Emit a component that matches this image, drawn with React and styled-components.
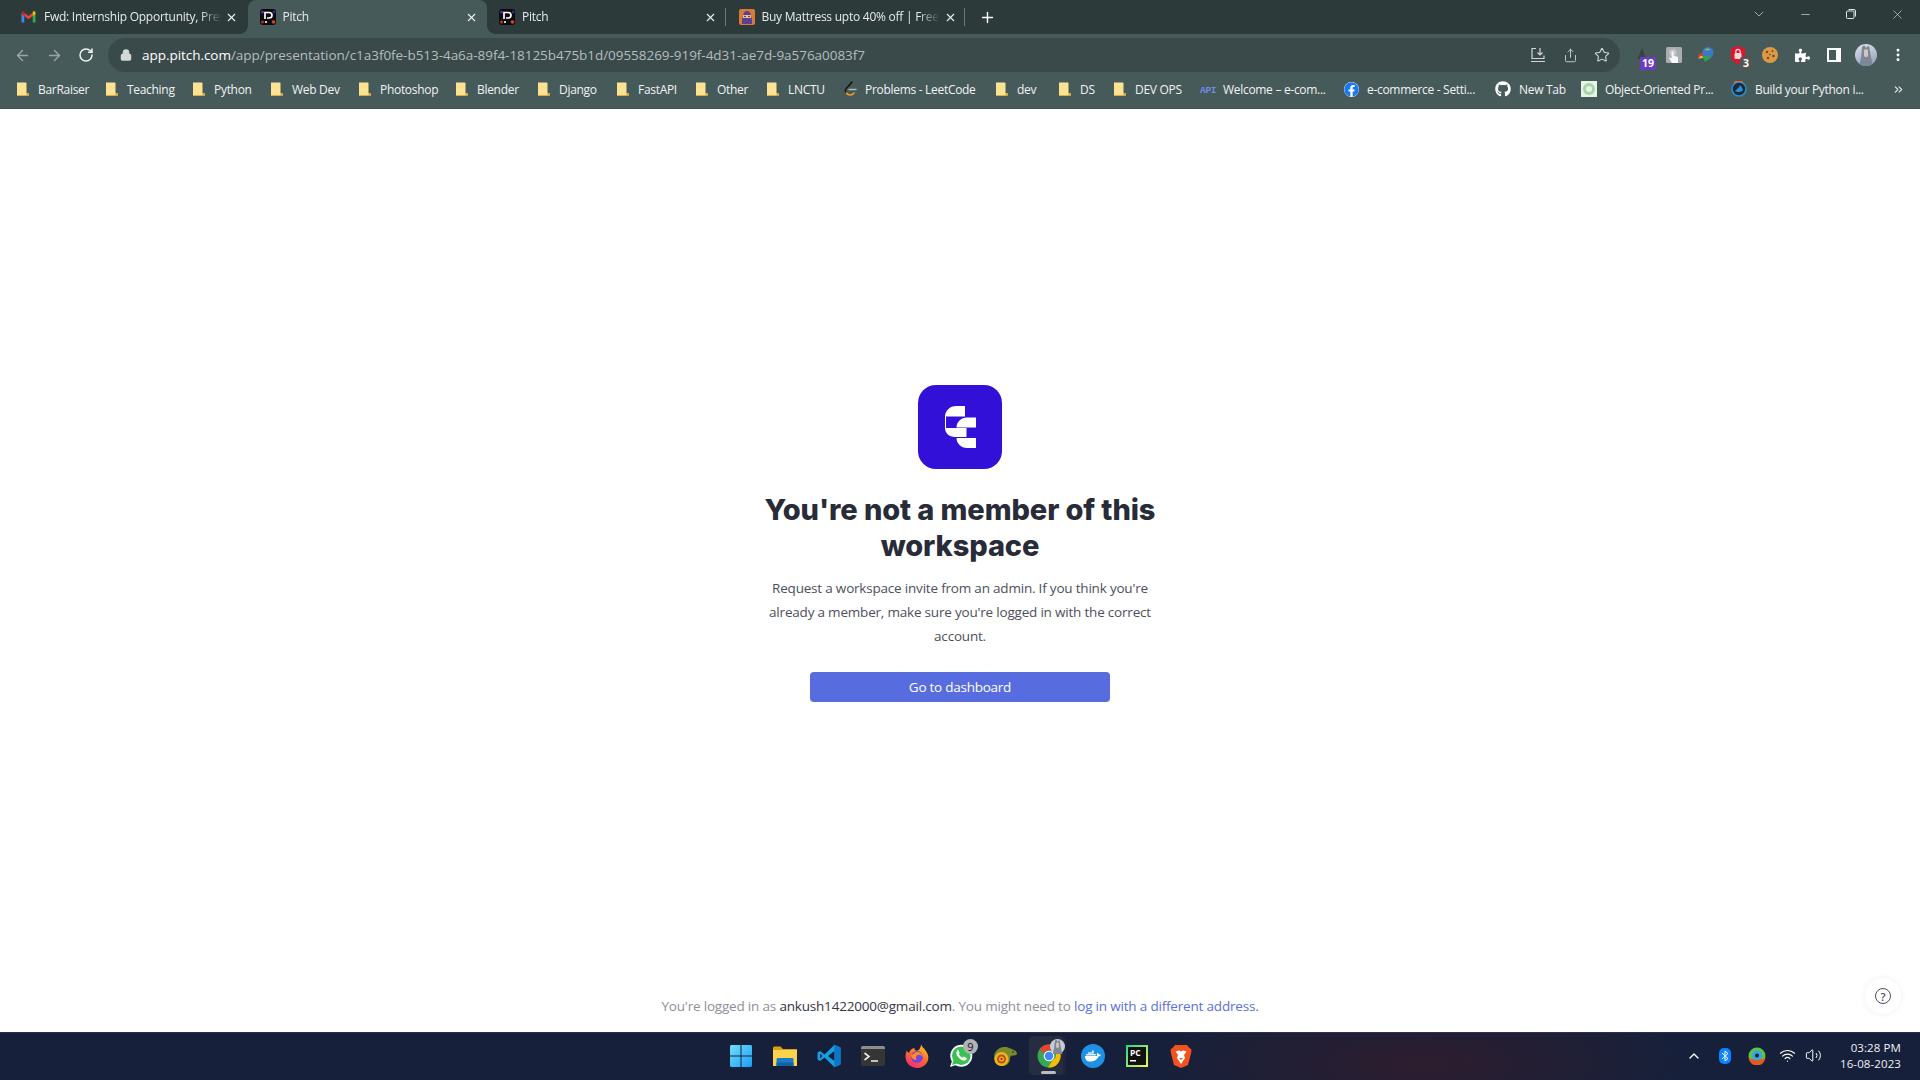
import React from 'react';
import styled, { createGlobalStyle, css } from 'styled-components';
import { ArrowLeft, ArrowRight, RotateCw, Lock, Star, Share, X, Plus, ChevronDown, Minus, EllipsisVertical, ChevronUp, Wifi, Volume2, ChevronsRight } from 'lucide-react';
import { FaGithub, FaFacebook, FaPuzzlePiece, FaDocker } from 'react-icons/fa';

const GlobalStyle = createGlobalStyle`
    html, body { margin: 0; padding: 0; height: 100%; background: #fff; }
    #root { height: 100vh; }
    * { box-sizing: border-box; }
`;

const Page = styled.div`
    height: 100vh;
    display: flex;
    flex-direction: column;
    overflow: hidden;
    font-family: "Open Sans", "Noto Sans", sans-serif;
`;

// Tab strip
const TabStrip = styled.div`
    height: 34px;
    flex: none;
    display: flex;
    align-items: flex-end;
    padding-left: 8px;
    background: #2c3a3a;
`;
const Tab = styled.div`
    width: 239.5px;
    height: 34px;
    display: flex;
    align-items: center;
    padding: 0 8px 0 12px;
    border-radius: 8px 8px 0 0;
    position: relative;
    color: #e6eaea;
    background: ${p => (p.$active ? '#475a5a' : 'transparent')};
    ${p => p.$sep && css`
        &::after {
            content: '';
            position: absolute;
            right: 1px;
            top: 8px;
            height: 18px;
            width: 1px;
            background: #6b7878;
        }
    `}
    ${p => p.$active && css`
        &::before, &::after {
            content: '';
            position: absolute;
            bottom: 0;
            width: 8px;
            height: 8px;
        }
        &::before {
            left: -8px;
            background: radial-gradient(circle at 0 0, transparent 7.5px, #475a5a 8px);
        }
        &::after {
            right: -8px;
            background: radial-gradient(circle at 100% 0, transparent 7.5px, #475a5a 8px);
        }
    `}
`;
const TabTitle = styled.span`
    flex: 1;
    margin-left: 7px;
    font-size: 12px;
    line-height: 16px;
    margin-bottom: 1px;
    letter-spacing: -0.25px;
    white-space: nowrap;
    overflow: hidden;
    -webkit-mask-image: linear-gradient(to right, #000 88%, transparent 100%);
    mask-image: linear-gradient(to right, #000 88%, transparent 100%);
`;
const TabClose = styled.span`
    flex: none;
    width: 16px;
    display: flex;
    justify-content: center;
    margin-left: 2px;
    color: #f0f3f3;
`;
const NewTab = styled.div`
    width: 28px;
    height: 34px;
    margin-left: 7px;
    display: flex;
    align-items: center;
    justify-content: center;
    color: #fff;
`;
const WindowControls = styled.div`
    margin-left: auto;
    height: 28px;
    align-self: flex-start;
    display: flex;
    align-items: center;
    color: #dfe5e5;
`;
const WinBtn = styled.div`
    width: 46px;
    height: 28px;
    display: flex;
    align-items: center;
    justify-content: center;
`;

// Toolbar
const Toolbar = styled.div`
    height: 42px;
    flex: none;
    display: flex;
    align-items: center;
    padding: 0 0 0 6px;
    background: #475a5a;
`;
const NavBtn = styled.div`
    width: 32px;
    height: 32px;
    display: flex;
    align-items: center;
    justify-content: center;
    color: ${p => (p.$dim ? '#9aa6a6' : '#f1f4f4')};
`;
const Omnibox = styled.div`
    margin-left: 6px;
    width: 1512px;
    height: 34px;
    border-radius: 17px;
    background: #3a4a4a;
    display: flex;
    align-items: center;
    padding: 0 2px 0 12px;
`;
const Url = styled.div`
    margin-left: 10px;
    font-size: 13.5px;
    letter-spacing: -0.04px;
    color: #b4bdbd;
    white-space: nowrap;
    flex: 1;
    b { color: #fff; font-weight: 400; }
`;
const OmniIcon = styled.div`
    width: 32px;
    display: flex;
    justify-content: center;
    color: #d2d8d8;
`;
const Extensions = styled.div`
    display: flex;
    align-items: center;
    margin-left: 6px;
`;
const Ext = styled.div`
    width: 32px;
    height: 32px;
    display: flex;
    align-items: center;
    justify-content: center;
    position: relative;
    color: #fff;
`;
const ExtBadge = styled.span`
    position: absolute;
    right: 2px;
    bottom: 1px;
    min-width: ${p => p.$w}px;
    height: 13px;
    border-radius: 2px;
    font-size: 10.5px;
    font-weight: 700;
    line-height: 13px;
    text-align: center;
    color: #fff;
    background: ${p => p.$bg};
`;
const Avatar = styled.div`
    width: 22px;
    height: 22px;
    border-radius: 50%;
    background: linear-gradient(160deg, #dfe4ec 0%, #aeb8cc 60%, #8d99ad 100%);
    overflow: hidden;
    display: flex;
    align-items: center;
    justify-content: center;
`;

// Bookmarks
const BookmarkBar = styled.div`
    height: 33px;
    flex: none;
    display: flex;
    align-items: center;
    padding: 0 0 6px 7px;
    background: #475a5a;
    border-bottom: 1px solid #3f5050;
`;
const Bookmark = styled.div`
    width: ${p => p.$w}px;
    flex: none;
    padding-left: 9px;
    display: flex;
    align-items: center;
    gap: ${p => p.$gap || 8}px;
    color: #f0f3f3;
    font-size: 12px;
    letter-spacing: -0.3px;
    white-space: nowrap;
`;
const More = styled.div`
    margin-left: auto;
    margin-right: 15px;
    color: #e6eaea;
    display: flex;
`;
const FacebookIcon = styled(FaFacebook)`
    background: #fff;
    border-radius: 50%;
`;

// Main content
const Main = styled.main`
    flex: 1;
    min-height: 0;
    position: relative;
    display: flex;
    flex-direction: column;
    align-items: center;
    background: #fff;
`;
const Card = styled.div`
    width: 420px;
    margin-top: 276px;
    display: flex;
    flex-direction: column;
    align-items: center;
    text-align: center;
`;
const Heading = styled.h1`
    margin: 23px 0 0;
    width: 400px;
    font-family: Inter, "Open Sans", sans-serif;
    font-size: 29px;
    font-weight: 800;
    line-height: 36px;
    letter-spacing: -0.1px;
    color: #282b38;
`;
const Text = styled.p`
    margin: 12px 0 0;
    width: 396px;
    font-size: 13.5px;
    line-height: 24px;
    letter-spacing: -0.2px;
    color: #4d4f5c;
`;
const Button = styled.button`
    margin-top: 24px;
    width: 300px;
    height: 30px;
    border: none;
    border-radius: 4px;
    background: #576ddf;
    color: #fff;
    font-family: inherit;
    font-size: 13.5px;
    font-weight: 500;
    letter-spacing: -0.25px;
`;
const Footer = styled.div`
    margin-top: auto;
    margin-bottom: 16px;
    font-size: 13.5px;
    line-height: 20px;
    letter-spacing: -0.19px;
    color: #8e8f99;
    span { color: #33353f; }
    a { color: #5a6fe0; text-decoration: none; }
`;
const Help = styled.div`
    position: absolute;
    right: 19px;
    bottom: 18px;
    width: 36px;
    height: 36px;
    border-radius: 50%;
    background: #fff;
    box-shadow: 0 0 6px rgba(0, 0, 0, 0.07);
    display: flex;
    align-items: center;
    justify-content: center;
    color: #4d4f5c;
    span {
        width: 16px;
        height: 16px;
        border: 1.3px solid #4d4f5c;
        border-radius: 50%;
        display: flex;
        align-items: center;
        justify-content: center;
        font-size: 11px;
        font-weight: 600;
    }
`;

// Taskbar
const Taskbar = styled.footer`
    height: 48px;
    flex: none;
    display: grid;
    grid-template-columns: 1fr auto 1fr;
    align-items: center;
    border-top: 1px solid #2c3344;
    background: radial-gradient(ellipse 260px 70px at 1420px 30px, #2e1d2e 0%, rgba(46, 29, 46, 0) 100%), #17203a;
`;
const TaskIcons = styled.div`
    grid-column: 2;
    margin-left: 2px;
    display: flex;
`;
const TaskIcon = styled.div`
    width: 44px;
    height: 47px;
    padding-bottom: 2px;
    display: flex;
    align-items: center;
    justify-content: center;
    position: relative;
    ${p => p.$active && css`
        &::before {
            content: '';
            position: absolute;
            left: 2px;
            top: 3px;
            width: 34px;
            height: 39px;
            border-radius: 4px;
            background: #262d41;
            box-shadow: 3px 0 0 #1f2639;
        }
        &::after {
            content: '';
            position: absolute;
            left: 14px;
            bottom: 6px;
            width: 15px;
            height: 3px;
            border-radius: 2px;
            background: #b9bcc3;
        }
    `}
    svg { position: relative; }
`;
const TaskBadge = styled.span`
    position: absolute;
    top: 6px;
    right: ${p => p.$right}px;
    width: 15px;
    height: 15px;
    border-radius: 50%;
    background: ${p => p.$bg || '#b0b2b6'};
    color: #111;
    font-size: 11px;
    line-height: 15px;
    text-align: center;
`;
const DockerBadge = styled.div`
    width: 24px;
    height: 24px;
    border-radius: 50%;
    background: #1e90e6;
    color: #fff;
    display: flex;
    align-items: center;
    justify-content: center;
`;
const Tray = styled.div`
    grid-column: 3;
    justify-self: end;
    display: flex;
    align-items: center;
    color: #fff;
    padding: 0 19px 2px 0;
`;
const TrayIcon = styled.div`
    width: ${p => p.$w}px;
    display: flex;
    justify-content: center;
`;
const Clock = styled.div`
    margin-left: 15px;
    font-size: 11.5px;
    line-height: 16px;
    text-align: right;
    color: #f1f2f5;
    letter-spacing: 0.1px;
`;

// Favicons and logos
const BookmarkFolder = () => (
    <svg width="14" height="14" viewBox="0 0 14 14">
        <path d="M1 .5h8.500c.6 0 1 .4 1 1V11h2.500v2.500H1z" fill="#fde293" />
        <path d="M10.500 11H13v2.500h-2.500z" fill="#d9a93a" />
        <path d="M1 13h9.500v.8H1z" fill="#e3b341" />
    </svg>
);
const PitchFavicon = () => (
    <svg width="16" height="16" viewBox="0 0 16 16">
        <rect width="16" height="16" rx="3" fill="#0d0a12" />
        <circle cx="2.500" cy="3" r="1.500" fill="#5a2fb0" />
        <circle cx="14" cy="3" r="1.400" fill="#3a2a8a" />
        <circle cx="13.500" cy="13" r="1.800" fill="#d8481e" />
        <circle cx="2.500" cy="13" r="1.600" fill="#b2301c" />
        <path d="M5 10V3.500h4c1.800 0 3 1.100 3 2.800S10.800 9 9 9H7" fill="none" stroke="#fff" strokeWidth="1.700" />
        <circle cx="6" cy="13" r="1.100" fill="#fff" />
    </svg>
);
const GmailFavicon = () => (
    <svg width="17" height="16" viewBox="0 0 16 16">
        <path d="M1 13.500V4.200L3.800 6v7.500H1.800z" fill="#4285f4" />
        <path d="M12.200 13.500V6L15 4.200v9.300z" fill="#34a853" />
        <path d="M3.800 7V3.800L8 7l4.200-3.200V7L8 10.200z" fill="#ea4335" />
        <path d="M1 5V3.800c0-1.300 1.500-2 2.500-1.200l.3.200V7z" fill="#c5221f" />
        <path d="M12.200 7V2.800l.3-.2c1-.8 2.500-.1 2.500 1.200V5z" fill="#fbbc04" />
    </svg>
);
const NinjaFavicon = () => (
    <svg width="16" height="16" viewBox="0 0 16 16">
        <rect width="16" height="16" rx="2" fill="#d9793a" />
        <path d="M3 15c0-5 .5-13 5-13s5 8 5 13z" fill="#5a3f8e" />
        <rect x="4" y="6" width="8" height="3" fill="#e8c3a5" />
        <circle cx="6" cy="7.500" r=".8" fill="#222" />
        <circle cx="10" cy="7.500" r=".8" fill="#222" />
    </svg>
);
const LeetCodeIcon = () => (
    <svg width="15" height="16" viewBox="0 0 15 16">
        <path d="M6 4.500 3.500 7c-1.500 1.800-1.500 3.600 0 5" fill="none" stroke="#1c1c1c" strokeWidth="1.600" strokeLinecap="round" />
        <path d="M9 1 6 4.500" stroke="#111" strokeWidth="1.600" strokeLinecap="round" />
        <path d="M6 8.500h7" stroke="#b6b6b6" strokeWidth="1.500" strokeLinecap="round" />
        <path d="M3.500 12c1.800 2.600 5.500 2.600 7.500 0" fill="none" stroke="#f89f1b" strokeWidth="1.500" strokeLinecap="round" />
    </svg>
);
const ApiIcon = () => (
    <svg width="17" height="12" viewBox="0 0 17 12">
        <text x="0" y="10" fontSize="9.500" fontFamily="Liberation Mono, monospace" fontWeight="700" fill="#6f8de8">API</text>
    </svg>
);
const GuruIcon = () => (
    <svg width="16" height="16" viewBox="0 0 16 16">
        <rect width="16" height="16" fill="#e8f3e8" />
        <circle cx="8" cy="8" r="6" fill="#a6d5a6" />
        <circle cx="8" cy="8" r="3" fill="#e8f3e8" />
    </svg>
);
const PythonCourseIcon = () => (
    <svg width="16" height="16" viewBox="0 0 16 16">
        <circle cx="8" cy="8" r="7" fill="#1d2a3a" stroke="#2b8fd0" strokeWidth="1.500" />
        <path d="M3 1.800a7 7 0 0 1 9 0" fill="none" stroke="#e8663a" strokeWidth="1.500" />
        <path d="M4 10c2 1.500 6 1.500 8-1-.5-1.800-2-4-3-5 0 2-3 4-5 6z" fill="#2b8fd0" />
    </svg>
);
const AdblockIcon = () => (
    <svg width="16" height="16" viewBox="0 0 16 16">
        <path d="M8 1 3.500 12h2l.9-2.300h3.200L10.500 12h2z" fill="#2c3a3a" opacity=".7" />
    </svg>
);
const TouchIcon = () => (
    <svg width="16" height="16" viewBox="0 0 20 20">
        <rect width="20" height="20" rx="2" fill="#a9adad" />
        <circle cx="8.500" cy="7" r="4.500" fill="#c4c7c7" />
        <path d="M7 6.500c0-1.500 2.500-1.500 2.500 0v4.500l4 1c1 .3 1.500 1 1.500 2v6H7.500L4 14.500c-.5-1 .8-2 1.800-1l1.200 1z" fill="#f6f7f7" />
    </svg>
);
const IdmIcon = () => (
    <svg width="18" height="18" viewBox="0 0 18 18">
        <circle cx="11" cy="6.500" r="5.500" fill="#3f78c9" />
        <path d="M8 3.500c2-1.500 4-1 5 0-1 1-4 1.500-5 0z" fill="#88c057" />
        <path d="M1 11c0-3 2-4 5-4v3c-2 0-2.500.5-3 2z" fill="#d63b2f" />
        <path d="M1.500 12.500c.5-2 2-2.500 4.500-2.500v2z" fill="#f4b93a" />
        <path d="M5 9.500 15 11l-7 5z" fill="#2ea44f" />
    </svg>
);
const LockShield = () => (
    <svg width="18" height="20" viewBox="0 0 18 20">
        <path d="M9 1 2 3.500V11c0 3.500 3 6.500 7 8 4-1.500 7-4.500 7-8V3.500z" fill="#e0142a" />
        <rect x="5.500" y="8" width="7" height="6" rx="1" fill="#f6d9d9" />
        <path d="M6.800 8V6.500a2.200 2.200 0 0 1 4.400 0V8" fill="none" stroke="#f6d9d9" strokeWidth="1.300" />
    </svg>
);
const CookieIcon = () => (
    <svg width="18" height="18" viewBox="0 0 18 18">
        <circle cx="9" cy="9" r="8" fill="#dd9a45" />
        <circle cx="6" cy="6" r="1.300" fill="#7a4a1c" />
        <circle cx="11.500" cy="5" r="1" fill="#7a4a1c" />
        <circle cx="12.500" cy="10" r="1.300" fill="#7a4a1c" />
        <circle cx="7" cy="12" r="1.200" fill="#7a4a1c" />
        <circle cx="9" cy="8.500" r=".8" fill="#7a4a1c" />
    </svg>
);
const SidePanelIcon = () => (
    <svg width="14" height="14" viewBox="0 0 14 14">
        <path d="M0 0h14v14H0zM2 2v10h7V2z" fill="#fff" fillRule="evenodd" />
    </svg>
);
const AvatarFigure = ({ size = 22 }) => (
    <svg width={size} height={size} viewBox="0 0 22 22">
        <path d="M7 3c1-1.500 2-2 3-1l1 2 2-2c1 0 1.500 1 1.500 2.500L16 13l2 9H4l2-8z" fill="#7c8798" />
        <path d="M9 6c1-1 3-1 4 0v6c-1 1.500-3 1.500-4 0z" fill="#d5c4b8" />
    </svg>
);
const DownloadPage = () => (
    <svg width="16" height="16" viewBox="0 0 16 16" fill="none" stroke="#d2d8d8" strokeWidth="1.200">
        <path d="M6 1.500H2v10h12v-3M1 14.500h14" />
        <path d="M10 1v6.500M7.500 5.500 10 8l2.500-2.500" />
    </svg>
);
const RestoreIcon = () => (
    <svg width="10" height="10" viewBox="0 0 10 10" fill="none" stroke="#dfe5e5" strokeWidth="1">
        <rect x=".5" y="2" width="7.500" height="7.500" rx="1" />
        <path d="M2.500 .5H8A1.500 1.500 0 0 1 9.500 2v5.500" />
    </svg>
);
const PitchLogo = () => (
    <svg width="84" height="84" viewBox="0 0 84 84">
        <rect width="84" height="84" rx="18" fill="#3310d8" />
        <path d="M47 21H38C32 21 27 26 27 31.500H47z" fill="#fff" />
        <path d="M27.500 31V43" stroke="#fff" strokeWidth="1" />
        <path d="M58 32.500H49C43 32.500 38.500 37 38.500 42.500H58z" fill="#fff" />
        <path d="M27 43H48.500V52H37C31 52 27 48 27 43z" fill="#fff" />
        <path d="M38.500 53H58V63H49C43 63 38.500 58.500 38.500 53z" fill="#fff" />
    </svg>
);

// Taskbar icons
const WindowsIcon = () => (
    <svg width="24" height="24" viewBox="0 0 24 24">
        <defs>
            <linearGradient id="win" x1="0" y1="0" x2="1" y2="1">
                <stop offset="0" stopColor="#6fe0fb" />
                <stop offset="1" stopColor="#1b9cf5" />
            </linearGradient>
        </defs>
        <path d="M1 2.500C1 1.700 1.700 1 2.500 1h9v10.500H1zM12.500 1h9c.8 0 1.500.7 1.500 1.500v9H12.500zM1 12.500h10.500V23h-9C1.700 23 1 22.300 1 21.500zM12.500 12.500H23v9c0 .8-.7 1.500-1.500 1.500h-9z" fill="url(#win)" />
    </svg>
);
const FolderIcon = () => (
    <svg width="24" height="24" viewBox="0 0 24 24">
        <path d="M0 4c0-.8.7-1.500 1.500-1.500h6L10 5h14v3H0z" fill="#d9a012" />
        <path d="M0 6h24v16H0z" fill="#fcd34f" />
        <path d="M5 14h14c1 0 1.500.7 1.500 1.500V22h-17v-6.500c0-.8.500-1.500 1.500-1.500z" fill="#1c7bc6" />
        <path d="M3.500 18.500h17V22h-17z" fill="#0f64a8" />
    </svg>
);
const VsCodeIcon = () => (
    <svg width="24" height="24" viewBox="0 0 24 24">
        <path d="M17.500 .8 23.500 3.500V20.500l-6 2.700L7.500 13.500 3 17 .5 15.500V8.500L3 7l4.500 3.500z M17.500 7 11 12l6.500 5z M3 9.500v5L5.500 12z" fill="#1b9de2" fillRule="evenodd" />
        <path d="M17.500 .8 23.500 3.500V20.500l-6 2.700V17V7z" fill="#0a78c2" />
    </svg>
);
const TerminalIcon = () => (
    <svg width="24" height="20" viewBox="0 0 24 20">
        <rect width="24" height="20" rx="2" fill="#353535" />
        <path d="M0 2a2 2 0 0 1 2-2h20a2 2 0 0 1 2 2v1H0z" fill="#8e8e8e" />
        <path d="M3.500 7l4.500 3.500L3.500 14" fill="none" stroke="#e8e8e8" strokeWidth="1.600" />
        <path d="M10 15h7" stroke="#e8e8e8" strokeWidth="1.600" />
    </svg>
);
const FirefoxIcon = () => (
    <svg width="24" height="24" viewBox="0 0 24 24">
        <defs>
            <linearGradient id="ff" x1="0.700" y1="0" x2="0.200" y2="1">
                <stop offset="0" stopColor="#ffc21c" />
                <stop offset="0.500" stopColor="#ff6a2b" />
                <stop offset="1" stopColor="#f0247e" />
            </linearGradient>
        </defs>
        <path d="M16 0c.5 3 3 4 4.500 6.500C24 11 24 15 22 18.500 20 22 16 24 12 24 5.500 24 .5 19 .5 12.500.5 10 1 8 2 6.500 2.500 8 3 8.500 4 9 5 6 7 4.500 9.500 4 9 6 11 7 13 6.500 15 5 16 3 16 0z" fill="url(#ff)" />
        <circle cx="12" cy="13" r="6" fill="#7542e5" />
        <path d="M6 11c3 0 3-3 6-3 3.500 0 6 2.500 6 5.500-1-2-3-3-5-2.500-2 .5-3 3.500-1 5-3 0-6-2-6-5z" fill="#ff8a1f" />
    </svg>
);
const WhatsAppIcon = () => (
    <svg width="24" height="24" viewBox="0 0 24 24">
        <circle cx="12.300" cy="11.700" r="11" fill="#fff" />
        <path d="M1 23l2-6 4 4z" fill="#fff" />
        <circle cx="12.300" cy="11.700" r="9.300" fill="#37c24f" />
        <path d="M3 21l1.600-5 3.400 3.400z" fill="#37c24f" />
        <path d="M8.500 6.500c-1 .8-1.500 2-1 3.500 1 3 3.500 5.500 6.500 6.500 1.500.4 2.700 0 3.500-1 .5-.7.4-1.500-.2-1.800l-2-1c-.5-.2-.8 0-1.100.3l-.6.7c-1.700-.6-3-2-3.800-3.600l.6-.7c.3-.3.3-.7.100-1l-.9-2c-.3-.6-1.100-.7-1.600-.4z" fill="#fff" />
    </svg>
);
const GeckoIcon = () => (
    <svg width="24" height="22" viewBox="0 0 24 22">
        <path d="M1 13C1 6 6 2 11 2c5 0 7 2 10 3 2 .8 3 2.500 3 3.500 0 1.500-2 2-4 2-2.500 0-3 1-3 3 0 5-4 7.500-8 7.500S1 18 1 13z" fill="#7a8a2a" />
        <circle cx="8.500" cy="14" r="7" fill="#e7b81e" />
        <circle cx="8.500" cy="14" r="4.500" fill="#d2441f" />
        <circle cx="8.500" cy="14" r="2.500" fill="#e7b81e" />
        <circle cx="8.500" cy="14" r="1" fill="#5b2a10" />
        <circle cx="20" cy="7" r=".8" fill="#222" />
    </svg>
);
const ChromeIcon = () => (
    <svg width="24" height="24" viewBox="0 0 24 24">
        <circle cx="12" cy="12" r="11.500" fill="#34a853" />
        <path d="M12 .5a11.500 11.500 0 0 1 10 5.800H12a5.700 5.700 0 0 0-5.300 3.500L2.800 5.200A11.500 11.500 0 0 1 12 .5z" fill="#ea4335" />
        <path d="M22 6.300A11.500 11.500 0 0 1 11 23.500l4.800-7.500a5.700 5.700 0 0 0 1-9.700z" fill="#fbbc04" />
        <circle cx="12" cy="12" r="5.300" fill="#fff" />
        <circle cx="12" cy="12" r="4.200" fill="#4285f4" />
    </svg>
);
const PyCharmIcon = () => (
    <svg width="22" height="22" viewBox="0 0 22 22">
        <defs>
            <linearGradient id="pc" x1="0" y1="0" x2="1" y2="1">
                <stop offset="0" stopColor="#21d789" />
                <stop offset="1" stopColor="#fcf84a" />
            </linearGradient>
        </defs>
        <rect width="22" height="22" fill="url(#pc)" />
        <rect x="2" y="2" width="18" height="18" fill="#111" />
        <text x="4" y="11" fontSize="8.500" fontWeight="700" fontFamily="Open Sans, sans-serif" fill="#fff">PC</text>
        <rect x="4" y="15" width="6" height="1.500" fill="#fff" />
    </svg>
);
const BraveIcon = () => (
    <svg width="22" height="24" viewBox="0 0 22 24">
        <path d="M5 1h12l2 2.500 2.500 2-.5 4-3 11.500-7 3-7-3L1 9.500l-.5-4 2.500-2z" fill="#f2531e" />
        <path d="M5.500 7.500 9 6.500l2 1 2-1 3.500 1L14 11l1 3-4 6-4-6 1-3z" fill="#fff" />
        <path d="M9 14h4l-2 2z" fill="#f2531e" />
    </svg>
);
const TrayApp = () => (
    <svg width="18" height="18" viewBox="0 0 18 18">
        <circle cx="9" cy="9" r="8.500" fill="#5ec14a" />
        <path d="M.5 10a8.500 8.500 0 0 0 17 0c-2 3-5 2-8.500 2s-6.500 1-8.500-2z" fill="#e8591f" />
        <circle cx="9" cy="8.500" r="5" fill="#38a6e6" />
        <circle cx="9" cy="8.500" r="2" fill="#16202e" />
    </svg>
);
const BluetoothPill = () => (
    <svg width="12" height="16" viewBox="0 0 12 16">
        <rect width="12" height="16" rx="5" fill="#0a84ff" />
        <path d="M3 5l6 5.500L6 13V3l3 2.500L3 11" fill="none" stroke="#fff" strokeWidth="1" />
    </svg>
);

const Tabs = [
    { icon: <GmailFavicon />, title: 'Fwd: Internship Opportunity, Pres', sep: false },
    { icon: <PitchFavicon />, title: 'Pitch', active: true },
    { icon: <PitchFavicon />, title: 'Pitch', sep: true },
    { icon: <NinjaFavicon />, title: 'Buy Mattress upto 40% off | Free', sep: true },
];

const folder = <BookmarkFolder />;
const Bookmarks = [
    { icon: folder, label: 'BarRaiser', w: 89 },
    { icon: folder, label: 'Teaching', w: 87 },
    { icon: folder, label: 'Python', w: 78 },
    { icon: folder, label: 'Web Dev', w: 88 },
    { icon: folder, label: 'Photoshop', w: 97 },
    { icon: folder, label: 'Blender', w: 82 },
    { icon: folder, label: 'Django', w: 79 },
    { icon: folder, label: 'FastAPI', w: 79 },
    { icon: folder, label: 'Other', w: 71 },
    { icon: folder, label: 'LNCTU', w: 77 },
    { icon: <LeetCodeIcon />, label: 'Problems - LeetCode', w: 152, gap: 7 },
    { icon: folder, label: 'dev', w: 63 },
    { icon: folder, label: 'DS', w: 55 },
    { icon: folder, label: 'DEV OPS', w: 87 },
    { icon: <ApiIcon />, label: 'Welcome – e-com...', w: 144, gap: 6 },
    { icon: <FacebookIcon size={15} color="#1877f2" />, label: 'e-commerce - Setti...', w: 151 },
    { icon: <FaGithub size={16} color="#fff" />, label: 'New Tab', w: 86 },
    { icon: <GuruIcon />, label: 'Object-Oriented Pr...', w: 150 },
    { icon: <PythonCourseIcon />, label: 'Build your Python i...', w: 150 },
];

const App = () => {
    return (
        <Page>
            <GlobalStyle />
            <TabStrip>
                {Tabs.map((t, i) => (
                    <Tab key={i} $active={t.active} $sep={t.sep}>
                        {t.icon}
                        <TabTitle>{t.title}</TabTitle>
                        <TabClose><X size={13} strokeWidth={2} /></TabClose>
                    </Tab>
                ))}
                <NewTab><Plus size={17} strokeWidth={2} /></NewTab>
                <WindowControls>
                    <WinBtn><ChevronDown size={16} strokeWidth={1} /></WinBtn>
                    <WinBtn><Minus size={13} strokeWidth={1.200} /></WinBtn>
                    <WinBtn><RestoreIcon /></WinBtn>
                    <WinBtn><X size={15} strokeWidth={1} /></WinBtn>
                </WindowControls>
            </TabStrip>

            <Toolbar>
                <NavBtn $dim><ArrowLeft size={17} strokeWidth={2} /></NavBtn>
                <NavBtn $dim><ArrowRight size={17} strokeWidth={2} /></NavBtn>
                <NavBtn><RotateCw size={16} strokeWidth={2.200} /></NavBtn>
                <Omnibox>
                    <Lock size={12} strokeWidth={3} color="#d2d8d8" fill="#d2d8d8" />
                    <Url><b>app.pitch.com</b>/app/presentation/c1a3f0fe-b513-4a6a-89f4-18125b475b1d/09558269-919f-4d31-ae7d-9a576a0083f7</Url>
                    <OmniIcon><DownloadPage /></OmniIcon>
                    <OmniIcon><Share size={15} strokeWidth={1.400} /></OmniIcon>
                    <OmniIcon><Star size={16} strokeWidth={1.600} /></OmniIcon>
                </Omnibox>
                <Extensions>
                    <Ext><AdblockIcon /><ExtBadge $bg="#6c3cc0" $w={16}>19</ExtBadge></Ext>
                    <Ext><TouchIcon /></Ext>
                    <Ext><IdmIcon /></Ext>
                    <Ext><LockShield /><ExtBadge $bg="#555" $w={12}>3</ExtBadge></Ext>
                    <Ext><CookieIcon /></Ext>
                    <Ext><FaPuzzlePiece size={15} color="#fff" /></Ext>
                    <Ext><SidePanelIcon /></Ext>
                    <Ext><Avatar><AvatarFigure /></Avatar></Ext>
                    <Ext><EllipsisVertical size={16} strokeWidth={2.400} /></Ext>
                </Extensions>
            </Toolbar>

            <BookmarkBar>
                {Bookmarks.map((b) => (
                    <Bookmark key={b.label} $w={b.w} $gap={b.gap}>{b.icon}{b.label}</Bookmark>
                ))}
                <More><ChevronsRight size={13} strokeWidth={2} /></More>
            </BookmarkBar>

            <Main>
                <Card>
                    <PitchLogo />
                    <Heading>You're not a member of this workspace</Heading>
                    <Text>Request a workspace invite from an admin. If you think you're already a member, make sure you're logged in with the correct account.</Text>
                    <Button>Go to dashboard</Button>
                </Card>
                <Footer>
                    You're logged in as <span>ankush1422000@gmail.com</span>. You might need to <a href="#">log in with a different address.</a>
                </Footer>
                <Help><span>?</span></Help>
            </Main>

            <Taskbar>
                <TaskIcons>
                    <TaskIcon><WindowsIcon /></TaskIcon>
                    <TaskIcon><FolderIcon /></TaskIcon>
                    <TaskIcon><VsCodeIcon /></TaskIcon>
                    <TaskIcon><TerminalIcon /></TaskIcon>
                    <TaskIcon><FirefoxIcon /></TaskIcon>
                    <TaskIcon><WhatsAppIcon /><TaskBadge $right={5}>9</TaskBadge></TaskIcon>
                    <TaskIcon><GeckoIcon /></TaskIcon>
                    <TaskIcon $active><ChromeIcon /><TaskBadge $bg="#c7ccd6" $right={6}><AvatarFigure size={15} /></TaskBadge></TaskIcon>
                    <TaskIcon><DockerBadge><FaDocker size={16} /></DockerBadge></TaskIcon>
                    <TaskIcon><PyCharmIcon /></TaskIcon>
                    <TaskIcon><BraveIcon /></TaskIcon>
                </TaskIcons>
                <Tray>
                    <TrayIcon $w={32}><ChevronUp size={16} strokeWidth={2} /></TrayIcon>
                    <TrayIcon $w={31}><BluetoothPill /></TrayIcon>
                    <TrayIcon $w={32}><TrayApp /></TrayIcon>
                    <TrayIcon $w={30}><Wifi size={17} strokeWidth={1.600} /></TrayIcon>
                    <TrayIcon $w={22}><Volume2 size={17} strokeWidth={1.400} /></TrayIcon>
                    <Clock>03:28 PM<br />16-08-2023</Clock>
                </Tray>
            </Taskbar>
        </Page>
    );
};

export default App;
